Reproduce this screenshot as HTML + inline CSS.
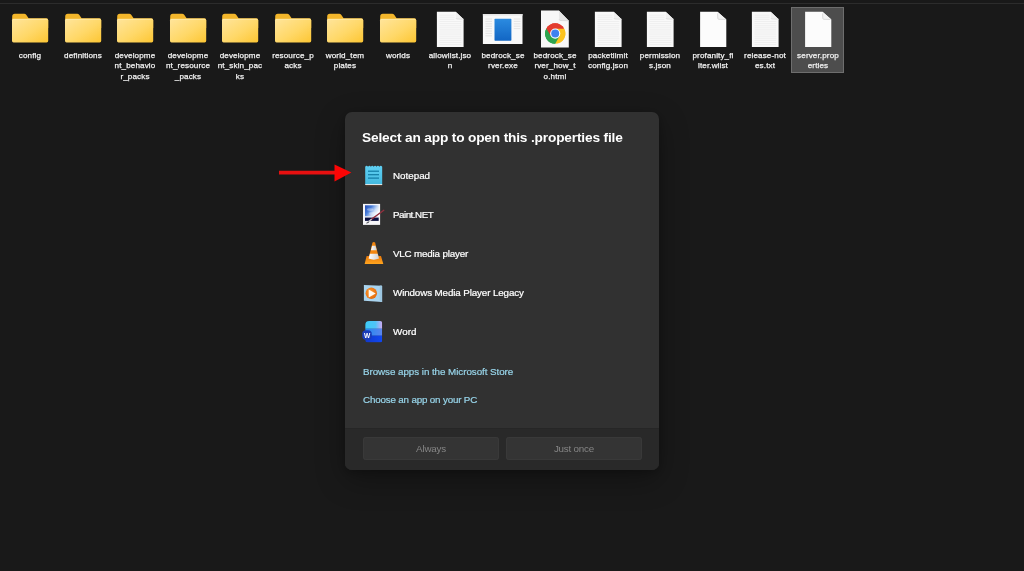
<!DOCTYPE html>
<html>
<head>
<meta charset="utf-8">
<title>Open with</title>
<style>
html,body{margin:0;padding:0;}
body{width:1024px;height:571px;background:#191919;overflow:hidden;position:relative;font-family:"Liberation Sans",sans-serif;}
.lbl,.name,.title,.link,.btn{will-change:transform;}
.topline{position:absolute;left:0;top:3px;width:1024px;height:1px;background:#2c2c2c;}
.item{position:absolute;top:8px;width:52px;height:65px;}
.item .ico{position:absolute;left:0;top:0;width:52px;height:44px;}
.item .lbl{position:absolute;left:-4px;width:60px;top:43px;text-align:center;color:#f2f2f2;font-size:8.1px;line-height:10.4px;letter-spacing:0.12px;white-space:nowrap;-webkit-text-stroke:0.25px #f2f2f2;}
.item.sel::before{content:"";position:absolute;left:-0.2px;top:-0.7px;width:52.2px;height:65.5px;background:#4d4d4d;box-shadow:inset 0 0 0 1px #6e6e6e;}
.dlg{position:absolute;left:345px;top:112px;width:314px;height:357.5px;background:#313131;border-radius:7px;overflow:hidden;box-shadow:0 10px 30px rgba(0,0,0,.30),0 2px 10px rgba(0,0,0,.22);}
.dlg .title{position:absolute;left:17.3px;top:18px;font-size:13.7px;font-weight:bold;color:#ffffff;white-space:nowrap;letter-spacing:-0.165px;}
.row{position:absolute;left:0;width:314px;height:39px;}
.row .aico{position:absolute;left:15px;top:6px;width:28px;height:28px;}
.row .name{-webkit-text-stroke:0.22px #fff;position:absolute;left:48.3px;top:13px;font-size:9.8px;line-height:12px;color:#ffffff;white-space:nowrap;}
.link{-webkit-text-stroke:0.2px #98d5ea;position:absolute;left:17.6px;font-size:9.8px;line-height:12px;color:#98d5ea;white-space:nowrap;}
.foot{position:absolute;left:0;top:316px;width:314px;height:42px;background:#292929;border-top:1px solid #262626;box-sizing:border-box;}
.btn{position:absolute;top:8px;width:136px;height:23px;border-radius:3px;background:#343434;box-shadow:inset 0 0 0 1px #393939;color:#868686;font-size:9.8px;line-height:24px;text-align:center;letter-spacing:-0.2px;}
.arrow{position:absolute;left:276px;top:160px;width:80px;height:26px;}
</style>
</head>
<body>
<div class="topline"></div>

<svg width="0" height="0" style="position:absolute">
<defs>
<linearGradient id="fg" x1="0" y1="0" x2="1" y2="1">
<stop offset="0" stop-color="#ffe59c"/><stop offset="0.55" stop-color="#ffd868"/><stop offset="1" stop-color="#fdc633"/>
</linearGradient>
<linearGradient id="exeb" x1="0" y1="0" x2="0" y2="1"><stop offset="0" stop-color="#2b8be0"/><stop offset="1" stop-color="#1266c4"/></linearGradient>
<g id="folder">
<path d="M8.2 8.6 Q8.2 5.8 10.8 5.8 L20.2 5.8 Q21.4 5.8 22.2 6.8 L24.6 10.2 L42.2 10.2 Q44.2 10.2 44.2 12.2 L44.2 20 L8.2 20 Z" fill="#f3b62b"/>
<rect x="8" y="10.8" width="36.2" height="23.6" rx="1.6" fill="url(#fg)"/>
<rect x="8.6" y="10.8" width="35" height="0.7" fill="#fff1c0" opacity="0.8"/>
<path d="M8.2 10.8 L21 10.8 Q22.6 10.8 23.6 10.2 L8.2 10.2 Z" fill="#f3b62b"/>
</g>
<g id="doc">
<path d="M12.9 3.7 L31.7 3.7 L39.6 11.2 L39.6 38.9 L12.9 38.9 Z" fill="#f9f9f9"/>
<g stroke="#ebebeb" stroke-width="0.7"><path d="M15.6 7.2H30.5M15.6 9.3H30.5M15.6 11.4H30.5M15.6 13.5H37.2M15.6 15.6H37.2M15.6 17.7H37.2M15.6 19.8H37.2M15.6 21.9H37.2M15.6 24.0H37.2M15.6 26.1H37.2M15.6 28.2H37.2M15.6 30.3H37.2M15.6 32.4H37.2M15.6 34.5H37.2M15.6 36.6H37.2"/></g>
<path d="M31.7 3.7 L32 10.2 Q32.1 11 33 11 L39.6 11.2 Z" fill="#efefef"/>
<path d="M32 10.2 Q32.1 11 33 11 L39.6 11.2" fill="none" stroke="#d2d2d2" stroke-width="0.6"/>
</g>
<g id="blank">
<path d="M13.1 3.7 L30.5 3.7 L39.3 11.5 L39.3 38.9 L13.1 38.9 Z" fill="#fcfcfc"/>
<path d="M30.5 3.7 L30.8 10.4 Q30.9 11.3 31.9 11.3 L39.3 11.5 Z" fill="#f3f3f3"/>
<path d="M30.6 5.5 L30.8 10.4 Q30.9 11.3 31.9 11.3 L38.6 11.45" fill="none" stroke="#cdcdcd" stroke-width="0.7"/>
</g>
</defs>
</svg>

<div class="item" style="left:4px"><svg class="ico" viewBox="0 0 52 44"><use href="#folder"/></svg><div class="lbl">config</div></div>
<div class="item" style="left:56.5px"><svg class="ico" viewBox="0 0 52 44"><use href="#folder"/></svg><div class="lbl">definitions</div></div>
<div class="item" style="left:109px"><svg class="ico" viewBox="0 0 52 44"><use href="#folder"/></svg><div class="lbl">developme<br>nt_behavio<br>r_packs</div></div>
<div class="item" style="left:161.5px"><svg class="ico" viewBox="0 0 52 44"><use href="#folder"/></svg><div class="lbl">developme<br>nt_resource<br>_packs</div></div>
<div class="item" style="left:214px"><svg class="ico" viewBox="0 0 52 44"><use href="#folder"/></svg><div class="lbl">developme<br>nt_skin_pac<br>ks</div></div>
<div class="item" style="left:266.5px"><svg class="ico" viewBox="0 0 52 44"><use href="#folder"/></svg><div class="lbl">resource_p<br>acks</div></div>
<div class="item" style="left:319px"><svg class="ico" viewBox="0 0 52 44"><use href="#folder"/></svg><div class="lbl">world_tem<br>plates</div></div>
<div class="item" style="left:371.5px"><svg class="ico" viewBox="0 0 52 44"><use href="#folder"/></svg><div class="lbl">worlds</div></div>

<div class="item" style="left:424px"><svg class="ico" viewBox="0 0 52 44"><use href="#doc"/></svg><div class="lbl">allowlist.jso<br>n</div></div>
<div class="item" style="left:476.5px"><svg class="ico" viewBox="0 0 52 44">
<rect x="5.9" y="6" width="39.6" height="30" fill="#f9f9f9"/>
<rect x="5.9" y="6" width="39.6" height="1.6" fill="#e6e6e6"/>
<g stroke="#e0e0e0" stroke-width="0.8"><path d="M8.4 11H15M8.4 13.4H15M8.4 15.8H15M8.4 18.2H15M8.4 20.6H15M8.4 23H15M8.4 25.4H15M8.4 27.8H15M36.8 11H43.4M36.8 13.4H43.4M36.8 15.8H43.4M36.8 18.2H43.4M36.8 20.6H43.4"/></g>
<rect x="17.5" y="10.8" width="16.9" height="21.9" rx="0.6" fill="url(#exeb)"/>
</svg><div class="lbl">bedrock_se<br>rver.exe</div></div>
<div class="item" style="left:529px"><svg class="ico" viewBox="0 0 52 44">
<path d="M12 2.6 L29.8 2.6 L39.8 12.8 L39.8 39.6 L12 39.6 Z" fill="#f7f7f7"/>
<path d="M29.8 2.6 L30.2 11.4 Q30.3 12.5 31.5 12.5 L39.8 12.8 Z" fill="#e6e6e6"/>
<path d="M30.2 11.4 Q30.3 12.5 31.5 12.5 L39.8 12.8" fill="none" stroke="#cfcfcf" stroke-width="0.6"/>
<g transform="translate(26.2,25.55)">
<circle r="10.2" fill="#fff"/>
<path d="M0 0 L-8.83 -5.1 A10.2 10.2 0 0 1 8.83 -5.1 Z" fill="#e33b2e"/>
<path d="M0 0 L8.83 -5.1 A10.2 10.2 0 0 1 0 10.2 Z" fill="#fcc31e"/>
<path d="M0 0 L0 10.2 A10.2 10.2 0 0 1 -8.83 -5.1 Z" fill="#2da44e"/>
<path d="M0 -5.1 L8.83 -5.1 A10.2 10.2 0 0 1 4.4 9.2 Z" fill="#fcc31e"/>
<path d="M4.42 2.55 L0 10.2 A10.2 10.2 0 0 1 -8.83 -5.1 L-4.42 2.55 Z" fill="#2da44e"/>
<path d="M-4.42 2.55 L-8.83 -5.1 A10.2 10.2 0 0 1 8.83 -5.1 L0 -5.1 Z" fill="#e33b2e"/>
<circle r="5.1" fill="#fff"/>
<circle r="4" fill="#3f82ef"/>
</g>
</svg><div class="lbl">bedrock_se<br>rver_how_t<br>o.html</div></div>
<div class="item" style="left:581.5px"><svg class="ico" viewBox="0 0 52 44"><use href="#doc"/></svg><div class="lbl">packetlimit<br>config.json</div></div>
<div class="item" style="left:634px"><svg class="ico" viewBox="0 0 52 44"><use href="#doc"/></svg><div class="lbl">permission<br>s.json</div></div>
<div class="item" style="left:686.5px"><svg class="ico" viewBox="0 0 52 44"><use href="#blank"/></svg><div class="lbl">profanity_fi<br>lter.wlist</div></div>
<div class="item" style="left:739px"><svg class="ico" viewBox="0 0 52 44"><use href="#doc"/></svg><div class="lbl">release-not<br>es.txt</div></div>
<div class="item sel" style="left:791.5px"><svg class="ico" viewBox="0 0 52 44"><use href="#blank"/></svg><div class="lbl">server.prop<br>erties</div></div>


<div class="dlg">
<div class="title">Select an app to open this .properties file</div>

<div class="row" style="top:45px"><div class="name">Notepad</div></div>
<div class="row" style="top:84px"><div class="name" style="letter-spacing:-0.5px">Paint.NET</div></div>
<div class="row" style="top:123px"><div class="name" style="letter-spacing:-0.18px">VLC media player</div></div>
<div class="row" style="top:162px"><div class="name" style="letter-spacing:-0.115px">Windows Media Player Legacy</div></div>
<div class="row" style="top:201px"><div class="name" style="letter-spacing:0.07px">Word</div></div>

<svg class="icons" style="position:absolute;left:11px;top:48px;width:36px;height:188px" viewBox="356 160 36 188">
<defs>
<linearGradient id="np" x1="0" y1="0" x2="0" y2="1"><stop offset="0" stop-color="#5fd0f3"/><stop offset="1" stop-color="#45b9df"/></linearGradient>
<linearGradient id="sky" x1="0" y1="0" x2="1" y2="0.6"><stop offset="0" stop-color="#2148b0"/><stop offset="0.4" stop-color="#4a7fdb"/><stop offset="0.72" stop-color="#c9dcf7"/><stop offset="1" stop-color="#ffffff"/></linearGradient>
<linearGradient id="vbase" x1="0" y1="0" x2="0" y2="1"><stop offset="0" stop-color="#e9780a"/><stop offset="1" stop-color="#ffa51f"/></linearGradient>
<linearGradient id="vw" x1="0" y1="0" x2="1" y2="0"><stop offset="0" stop-color="#ffffff"/><stop offset="1" stop-color="#cfcfcf"/></linearGradient>
<linearGradient id="w1" x1="0" y1="0" x2="1" y2="0"><stop offset="0" stop-color="#3ccbf7"/><stop offset="0.6" stop-color="#4fc4f7"/><stop offset="1" stop-color="#cfa9f2"/></linearGradient>
<linearGradient id="w2" x1="0" y1="0" x2="1" y2="0"><stop offset="0" stop-color="#1e8af2"/><stop offset="1" stop-color="#5b84ee"/></linearGradient>
<linearGradient id="w3" x1="0" y1="0" x2="1" y2="0"><stop offset="0" stop-color="#1238c9"/><stop offset="1" stop-color="#1048f2"/></linearGradient>
<radialGradient id="org" cx="0.4" cy="0.4" r="0.7"><stop offset="0" stop-color="#ff9a2e"/><stop offset="1" stop-color="#e0660c"/></radialGradient>
<clipPath id="wclip"><path d="M369.2 321 H380.2 Q382.2 321 382.2 323 V340.4 Q382.2 342.4 380.2 342.4 H367.8 Q365.2 342.4 365.2 339.8 V325 Q365.2 321 369.2 321 Z"/></clipPath>
</defs>
<!-- Notepad -->
<rect x="365.6" y="184.6" width="16.4" height="1.8" fill="#5e4132" opacity="0.75"/>
<path d="M365.2 166.8 q1.417 -2.2 2.833 0 q1.417 -2.2 2.833 0 q1.417 -2.2 2.833 0 q1.417 -2.2 2.833 0 q1.417 -2.2 2.833 0 q1.417 -2.2 2.833 0 V184.2 H365.2 Z" fill="url(#np)"/>
<rect x="365.2" y="184.1" width="17" height="0.9" fill="#e8f6fb"/>
<g fill="#117aa4"><rect x="368" y="170.6" width="11" height="1.2"/><rect x="368" y="174.1" width="11" height="1.2"/><rect x="368" y="177.5" width="11" height="1.2"/></g>
<!-- Paint.NET -->
<rect x="363" y="203.9" width="17.1" height="21" fill="#f6f6f8"/>
<rect x="365" y="205.3" width="13.7" height="11.6" fill="url(#sky)"/>
<ellipse cx="370.2" cy="209.6" rx="3.2" ry="1.4" fill="#ffffff" opacity="0.35"/>
<ellipse cx="373" cy="213.4" rx="4" ry="1.3" fill="#ffffff" opacity="0.3"/>
<rect x="365" y="216.2" width="13.7" height="1.5" fill="#dfe6f4"/>
<rect x="365" y="217.6" width="13.7" height="3.3" fill="#0b1040"/>
<path d="M383.8 210.3 L371 219.6" stroke="#93303f" stroke-width="1.35" stroke-linecap="round" fill="none"/>
<path d="M371.2 219.5 L367.4 222.6" stroke="#c8c8cc" stroke-width="1.4" stroke-linecap="round" fill="none"/>
<path d="M368.6 222.2 L366.8 223" stroke="#55555c" stroke-width="1" stroke-linecap="round" fill="none"/>
<!-- VLC -->
<path d="M366.6 256 L381 256 L383.3 263.9 L364.6 263.9 Z" fill="url(#vbase)"/>
<path d="M372.5 242.6 Q373.8 241.2 375.1 242.6 L379 258.6 Q373.8 260.8 368.6 258.6 Z" fill="#f2860f"/>
<path d="M372.1 245.7 L375.5 245.7 L376.7 250.2 L370.9 250.2 Z" fill="url(#vw)"/>
<path d="M369.9 253.8 L377.7 253.8 L379 258.6 Q373.8 260.8 368.6 258.6 Z" fill="url(#vw)"/>
<!-- WMP -->
<path d="M363.9 284.9 L382.1 285.7 L382.1 301.9 L363.9 300.8 Z" fill="#a9d4ef"/>
<path d="M379.8 285.6 L382.1 285.7 L382.1 301.9 L379.8 301.75 Z" fill="#9cc6e0"/>
<circle cx="371.3" cy="293.2" r="5.7" fill="url(#org)"/>
<path d="M368.7 289.4 L368.7 297.5 L375.7 293.4 Z" fill="#fff8f0"/>
<!-- Word -->
<g clip-path="url(#wclip)">
<rect x="365.2" y="321" width="17" height="7.8" fill="url(#w1)"/>
<rect x="365.2" y="328.6" width="17" height="7.2" fill="url(#w2)"/>
<rect x="365.2" y="335.6" width="17" height="6.8" fill="url(#w3)"/>
</g>
<rect x="362.2" y="330.3" width="9.6" height="9.4" rx="3.6" fill="#1a3cb8"/>
<text x="367" y="337.5" text-anchor="middle" font-family="Liberation Sans, sans-serif" font-weight="bold" font-size="6.6" fill="#ffffff">W</text>
</svg>
<div class="link" style="top:254px;letter-spacing:-0.05px">Browse apps in the Microsoft Store</div>
<div class="link" style="top:281.5px;letter-spacing:-0.17px">Choose an app on your PC</div>

<div class="foot">
<div class="btn" style="left:18px">Always</div>
<div class="btn" style="left:161px">Just once</div>
</div>
</div>
<svg class="arrow" viewBox="0 0 80 26"><path d="M3 10.8 H59 V14.4 H3 Z" fill="#e81010"/><path d="M58.5 4.6 L75.4 12.6 L58.5 21.4 Z" fill="#fb0505"/></svg>
</body>
</html>
